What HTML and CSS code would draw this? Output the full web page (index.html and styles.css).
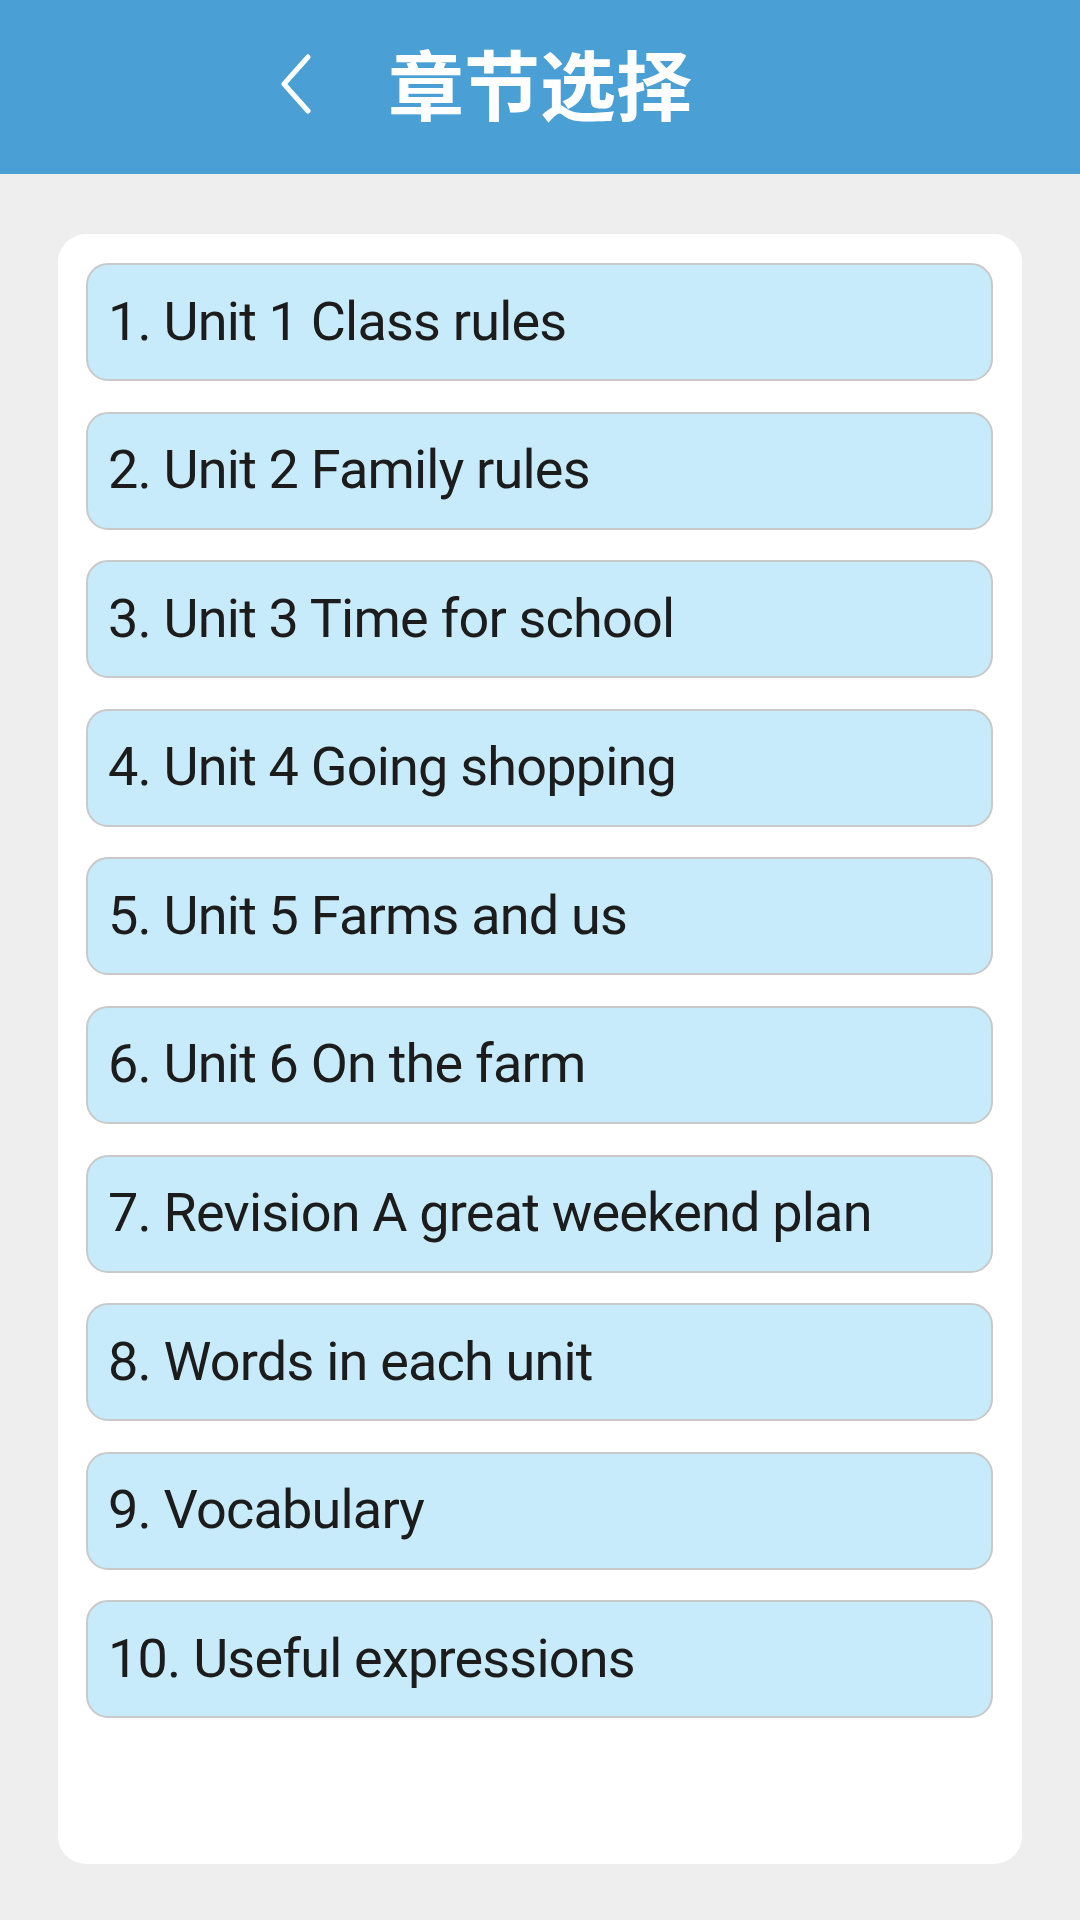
FILE: index.html
```html
<!DOCTYPE html>
<html lang="zh-CN">
<head>
  <meta charset="UTF-8" />
  <meta name="viewport" content="width=device-width, initial-scale=1.0" />
  <title>章节选择</title>
  <link rel="stylesheet" href="styles.css">
</head>
<body>
  <div class="topbar">
    <button class="back" aria-label="返回">
      <svg width="32" height="60" viewBox="0 0 32 60">
        <polyline points="28,3 4,30 28,57" fill="none" stroke="#fff" stroke-width="5" stroke-linejoin="round" stroke-linecap="round" />
      </svg>
    </button>
    <h1>章节选择</h1>
    <span></span>
  </div>

  <div class="card">
    <ul class="chapters">
      <li>1. Unit 1 Class rules</li>
      <li>2. Unit 2 Family rules</li>
      <li>3. Unit 3 Time for school</li>
      <li>4. Unit 4 Going shopping</li>
      <li>5. Unit 5 Farms and us</li>
      <li>6. Unit 6 On the farm</li>
      <li>7. Revision A great weekend plan</li>
      <li>8. Words in each unit</li>
      <li>9. Vocabulary</li>
      <li>10. Useful expressions</li>
    </ul>
  </div>
</body>
</html>
```

FILE: styles.css
```css
body {
  margin: 0;
  background-color: #eeeeee;
  font-family: Roboto, "Noto Sans CJK SC", sans-serif;
}
.topbar {
  height: 174px;
  background-color: #4aa0d5;
  display: grid;
  grid-template-columns: 1fr auto 1fr;
  align-items: center;
}
.back {
  justify-self: end;
  margin: 0 76px 6px 0;
  padding: 0;
  border: none;
  background: none;
  display: flex;
  cursor: pointer;
}
.topbar h1 {
  margin: 0 0 10px;
  color: #fff;
  font-family: "Noto Sans CJK SC", sans-serif;
  font-weight: bold;
  font-size: 76px;
  line-height: 1;
}
.card {
  box-sizing: border-box;
  height: 1630px;
  margin: 60px 58px 0;
  padding: 29px 29px 0 28px;
  background-color: #fff;
  border-radius: 28px;
}
.chapters {
  list-style: none;
  margin: 0;
  padding: 0;
  display: flex;
  flex-direction: column;
  gap: 30.6px;
}
.chapters li {
  box-sizing: border-box;
  height: 118px;
  display: flex;
  align-items: center;
  padding: 0 0 2px 20px;
  background-color: #c8ebfb;
  border: 2px solid #c9c9c9;
  border-radius: 22px;
  color: #1c1c1c;
  font-size: 54px;
  letter-spacing: -0.8px;
  cursor: pointer;
}
```
